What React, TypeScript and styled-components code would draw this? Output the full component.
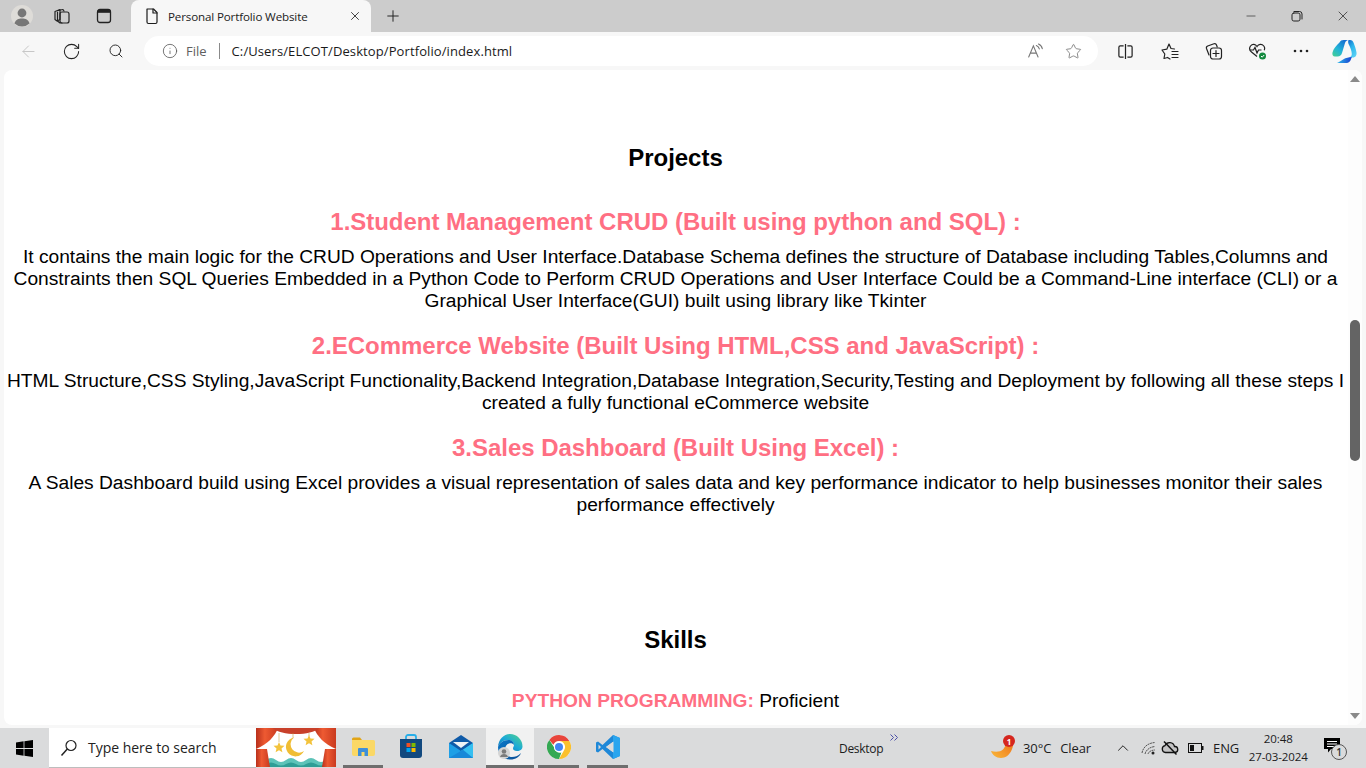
import React from "react";
import styled, { createGlobalStyle } from "styled-components";
import { ArrowLeft, RotateCw, Search, Info, Star, Plus, X, Minus, ChevronUp } from "lucide-react";

const Global = createGlobalStyle`
  html, body { margin: 0; padding: 0; width: 100%; height: 100%; overflow: hidden; background: #f7f7f7; }
  #root { width: 1366px; height: 768px; }
  * { box-sizing: border-box; }
`;

const UI = `"Open Sans", "Noto Sans", sans-serif`;

const Shell = styled.div`
  width: 1366px; height: 768px; display: flex; flex-direction: column;
  font-family: ${UI}; background: #f7f7f7; overflow: hidden;
`;
const TabStrip = styled.div`
  height: 32px; flex: none; background: #cccccc; display: flex; align-items: center;
`;
const Avatar = styled.div`
  width: 22px; height: 22px; margin-left: 11px; flex: none;
  display: flex;
`;
const StripIcon = styled.div<{ $ml: number }>`
  margin-left: ${p => p.$ml}px; width: 18px; height: 18px; flex: none; display: flex; color: #222;
`;
const Tab = styled.div`
  width: 240px; height: 32px; margin-left: 18px; flex: none; background: #f7f7f7;
  border-radius: 8px 8px 0 0; display: flex; align-items: center; padding-left: 13px; color: #1c1c1c;
  align-self: flex-end;
`;
const TabTitle = styled.div`
  margin-left: 8px; width: 180px; font-size: 11.6px; letter-spacing: -0.14px; white-space: nowrap; color: #222;
`;
const WindowControls = styled.div`
  margin-left: auto; display: flex; color: #222; padding-right: 0;
`;
const WinBtn = styled.div`
  width: 46px; height: 32px; display: flex; align-items: center; justify-content: center;
`;
const Toolbar = styled.div`
  height: 38px; flex: none; display: flex; align-items: flex-start; background: #f7f7f7; padding-top: 4px;
`;
const ToolIcon = styled.div<{ $w: number; $c?: string }>`
  width: ${p => p.$w}px; height: 30px; flex: none; display: flex; align-items: center; justify-content: center;
  color: ${p => p.$c || "#222"};
`;
const AddressBar = styled.div`
  width: 954px; height: 30px; margin-left: 16px; flex: none; background: #fff; border-radius: 15px;
  display: flex; align-items: center; padding-left: 18px; color: #555;
`;
const FileLabel = styled.span`
  margin-left: 8px; font-size: 13px; color: #5f5f5f;
`;
const Sep = styled.span`
  width: 1px; height: 16px; background: #8a8a8a; margin: 0 12px 0 12px;
`;
const Url = styled.span`
  font-size: 13px; color: #1a1a1a; letter-spacing: 0.1px;
`;
const AddressEnd = styled.div`
  margin-left: auto; display: flex; align-items: center; padding-right: 16px; gap: 21px; color: #777;
`;
const Viewport = styled.div`
  height: 655px; flex: none; margin: 0 4px 0 4px; background: #fff; border-radius: 8px;
  display: flex; overflow: hidden;
`;
const Page = styled.main`
  width: 1343px; flex: none; text-align: center; color: #000; font-family: "Liberation Sans", Arial, sans-serif;
  padding-top: 74px; overflow: hidden;
`;
const SectionTitle = styled.h2<{ $mt?: number }>`
  font-size: 24px; line-height: 28px; font-weight: 700; letter-spacing: -0.03px; margin: ${p => p.$mt || 0}px 0 0; color: #000;
`;
const ProjectTitle = styled.h3<{ $mt: number }>`
  font-size: 24px; line-height: 28px; font-weight: 700; letter-spacing: -0.03px; margin: ${p => p.$mt}px 0 0; color: #ff6f83;
`;
const Para = styled.p`
  font-size: 19.2px; line-height: 22px; margin: 10px 0 0;
`;
const SkillLine = styled.p`
  font-size: 19.2px; line-height: 22px; margin: 36px 0 0;
`;
const SkillName = styled.span`
  font-weight: 700; color: #ff6f83;
`;
const Scrollbar = styled.div`
  width: 14px; flex: none; margin-left: auto; background: #fdfdfd; display: flex; flex-direction: column;
  align-items: center; position: relative;
`;
const Arrow = styled.div<{ $down?: boolean }>`
  width: 0; height: 0; border-left: 5px solid transparent; border-right: 5px solid transparent;
  ${p => p.$down
    ? "border-top: 6px solid #8a8a8a; margin-top: auto; margin-bottom: 6px;"
    : "border-bottom: 6px solid #8a8a8a; margin-top: 6px;"}
`;
const Thumb = styled.div`
  width: 10px; height: 141px; background: #646464; border-radius: 5px; margin-top: 238px;
`;
const Taskbar = styled.div`
  height: 40px; flex: none; margin-top: 3px; background: #dadbdc; display: flex; align-items: stretch;
  position: relative;
`;
const StartBtn = styled.div`
  width: 49px; display: flex; align-items: center; justify-content: center; flex: none;
`;
const SearchBox = styled.div`
  width: 207px; flex: none; background: #fff; display: flex; align-items: center; padding-left: 11px;
  border-bottom: 1px solid #bdbdbd; color: #222;
`;
const SearchText = styled.span`
  font-size: 14px; margin-left: 10px; color: #222; letter-spacing: -0.02px; white-space: nowrap;
`;
const Banner = styled.div`
  width: 80px; flex: none; display: flex; height: 39px;
`;
const TaskIcons = styled.div`
  display: flex; flex: none; margin-left: 3px;
`;
const TaskItem = styled.div<{ $w: number; $active?: boolean; $running?: boolean }>`
  width: ${p => p.$w}px; flex: none; display: flex; align-items: center; justify-content: center; position: relative;
  background: ${p => p.$active ? "#f1f1f1" : "transparent"};
  padding-bottom: 3px;
  ${p => p.$running ? `&::after { content: ""; position: absolute; bottom: 0; left: ${p.$active ? 0 : 4}px; right: ${p.$active ? 0 : 4}px; height: 3px; background: #6e6e6e; }` : ""}
`;
const Tray = styled.div`
  display: flex; align-items: center; flex: 1; color: #1c1c1c; font-size: 13px;
`;
const DesktopLabel = styled.span`
  margin-left: 207px; font-size: 12px; letter-spacing: -0.3px; position: relative; width: 43px; flex: none; white-space: nowrap;
`;
const Chevrons = styled.span`
  position: absolute; left: 51px; top: -6px; display: flex; color: #4b4fa8;
`;
const Weather = styled.div`
  margin-left: 109px; width: 24px; height: 24px; position: relative; flex: none;
`;
const WeatherBadge = styled.span`
  position: absolute; right: 0; top: -1px; width: 12px; height: 12px; border-radius: 50%; background: #d5261e;
  color: #fff; font-size: 8px; font-weight: 700; display: flex; align-items: center; justify-content: center;
`;
const TrayText = styled.span<{ $ml: number }>`
  margin-left: ${p => p.$ml}px; white-space: nowrap; font-size: 13px; letter-spacing: -0.1px;
`;
const TrayIcon = styled.div<{ $ml: number }>`
  margin-left: ${p => p.$ml}px; display: flex; flex: none; color: #222;
`;
const Clock = styled.div`
  margin-left: 9px; width: 60px; text-align: center; font-size: 11.5px; line-height: 18px; letter-spacing: -0.1px; flex: none;
  white-space: nowrap;
`;
const NotifWrap = styled.div`
  margin-left: 16px; position: relative; width: 20px; height: 20px; flex: none;
`;
const NotifCount = styled.span`
  position: absolute; left: 7px; top: 6px; width: 16px; height: 16px; border-radius: 50%; border: 1px solid #555;
  background: #dadbdc; font-size: 10px; font-weight: 600; display: flex; align-items: center; justify-content: center; color: #333;
`;

const S = { fill: "none", stroke: "currentColor", strokeWidth: 1.2, strokeLinecap: "round" as const, strokeLinejoin: "round" as const };

const AvatarIcon = () => (
  <svg width="22" height="22" viewBox="0 0 22 22">
    <circle cx="11" cy="11" r="11" fill="#dedcd8" />
    <circle cx="11" cy="8" r="4.4" fill="#777" />
    <path d="M3.5 18.5C4.5 14.5 7.5 13.5 11 13.5s6.500 1 7.500 5A11 11 0 0 1 3.500 18.500z" fill="#777" />
  </svg>
);
const WorkspacesIcon = () => (
  <svg width="18" height="18" viewBox="0 0 18 18" {...S}>
    <path d="M2 4.500 7 2.500v10l-3 1.500-2-1.500z" />
    <path d="M5 3.500 10 2.500 11 4" />
    <rect x="7" y="5" width="9" height="11" rx="2" />
    <path d="M4.500 5 4.500 14 7 16h2" />
  </svg>
);
const TabsIcon = () => (
  <svg width="18" height="18" viewBox="0 0 18 18" fill="none" stroke="currentColor" strokeWidth="1.3">
    <rect x="2.500" y="2.500" width="13" height="13" rx="2.500" />
    <path d="M3 5.200h12V5a2 2 0 0 0-2-2H5a2 2 0 0 0-2 2z" fill="currentColor" />
  </svg>
);
const PageIcon = () => (
  <svg width="16" height="18" viewBox="0 0 16 18" {...S}>
    <path d="M3 2h6.500L13 5.500V15a1.500 1.500 0 0 1-1.500 1.500h-7A1.500 1.500 0 0 1 3 15z" />
    <path d="M9 2v4h4" />
  </svg>
);
const RestoreIcon = () => (
  <svg width="12" height="12" viewBox="0 0 12 12" {...S} strokeWidth="1">
    <rect x="1" y="3" width="8" height="8" rx="1.800" />
    <path d="M3 1.500h5.500A2.500 2.500 0 0 1 11 4v5" />
  </svg>
);
const ReadAloud = () => (
  <svg width="17" height="16" viewBox="0 0 20 18" fill="none" stroke="#777" strokeWidth="1.300" strokeLinecap="round">
    <path d="M2 16 7.500 3 13 16M4 11.500h7" />
    <path d="M11 2.500c2 .8 3 2 3.500 4M13.500.8c2.500 1 4 3 4.500 5.500" />
  </svg>
);
const SplitIcon = () => (
  <svg width="17" height="17" viewBox="0 0 18 18" fill="none" stroke="#222" strokeWidth="1.300">
    <path d="M7 3H3.500A1.500 1.500 0 0 0 2 4.500v9A1.500 1.500 0 0 0 3.500 15H7M11 3h3.500A1.500 1.500 0 0 1 16 4.500v9a1.500 1.500 0 0 1-1.500 1.500H11M9 1v16" />
  </svg>
);
const FavIcon = () => (
  <svg width="18" height="18" viewBox="0 0 18 18" {...S} stroke="#222">
    <path d="M8 2l2 4.500 3.500.5M6.500 15.500 3 16.500l.8-4.500L1 8l4.800-.800L8 2M6.500 15.500l2.500 1.500" />
    <path d="M11 9.500h6M11 12.500h6M11 15.500h6" />
  </svg>
);
const CollectionsIcon = () => (
  <svg width="18" height="18" viewBox="0 0 18 18" {...S} stroke="#222">
    <path d="M4 13 1.500 6.500a2 2 0 0 1 1.200-2.500L9 1.800a2 2 0 0 1 2.500 1.200l.7 2" />
    <rect x="5.500" y="6" width="11" height="11" rx="2.500" />
    <path d="M11 8.500v6M8 11.500h6" />
  </svg>
);
const HealthIcon = () => (
  <svg width="20" height="20" viewBox="0 0 20 20">
    <path d="M9 15.500 3.500 11a4.500 4.500 0 0 1-1-6c2-2.500 5-2 6.500.5 1.500-2.500 4.800-3 6.800-.5 1 1.300 1 3 .4 4.300" fill="none" stroke="#222" strokeWidth="1.200" />
    <path d="M2 9h3.500l1.500-2.500 2 5.500 1.500-3h3" fill="none" stroke="#222" strokeWidth="1.200" />
    <circle cx="14.500" cy="15" r="3.500" fill="#12893d" />
    <path d="M13 15l1.200 1.200 2-2.200" fill="none" stroke="#fff" strokeWidth="1" />
  </svg>
);
const DotsIcon = () => (
  <svg width="16" height="4" viewBox="0 0 16 4" fill="#222">
    <circle cx="2" cy="2" r="1.300" /><circle cx="8" cy="2" r="1.300" /><circle cx="14" cy="2" r="1.300" />
  </svg>
);
const CopilotIcon = () => (
  <svg width="25" height="25" viewBox="0 0 25 25">
    <defs>
      <linearGradient id="cp1" x1="0" y1="1" x2=".8" y2="0"><stop offset="0" stopColor="#46d08e" /><stop offset=".45" stopColor="#22b4d8" /><stop offset="1" stopColor="#1468d0" /></linearGradient>
      <linearGradient id="cp2" x1=".2" y1="0" x2=".8" y2="1"><stop offset="0" stopColor="#1573cf" /><stop offset=".4" stopColor="#2cb6ec" /><stop offset="1" stopColor="#5cd2f5" /></linearGradient>
      <linearGradient id="cp3" x1="0" y1="0" x2="1" y2="0"><stop offset="0" stopColor="#2bb8ea" /><stop offset="1" stopColor="#1a3fd0" /></linearGradient>
    </defs>
    <path d="M7.500 3.500C8.200 1.800 9.800 1 11.500 1h5c-1.700.3-3 1.300-3.500 3L10 14c-.7 2-2 3.500-4.500 3.500H3C.8 17.500 0 15.500.5 13.500 1.300 10 4.500 6 7.500 3.500z" fill="url(#cp1)" />
    <path d="M16.500 1h1.500c2 0 3 1 3.700 3 1 3 2.300 6 2.800 9.500.4 2.700-1 5-3.500 5h-4c1.800-.5 2.800-1.600 2.800-3.500 0-3-1.500-6.500-3-9.500-.6-1.300-1-3-.3-4.500z" fill="url(#cp2)" />
    <path d="M5 24h9.500c2.200 0 3.600-1.200 4.300-3.200l1-2.800c-3 .2-6 .8-8.300 2.300C9.500 21.500 7 23.500 5 24z" fill="url(#cp3)" />
  </svg>
);
const WinLogo = () => (
  <svg width="17" height="17" viewBox="0 0 17 17" fill="#000">
    <path d="M0 2.400 7.600 1.300v6.700H0zM8.400 1.200 17 0v8H8.400zM0 8.900h7.600v6.800L0 14.600zM8.400 8.900H17V17l-8.600-1.200z" />
  </svg>
);
const SearchGlass = () => (
  <svg width="18" height="18" viewBox="0 0 18 18" fill="none" stroke="#222" strokeWidth="1.200">
    <circle cx="11" cy="6.500" r="5" />
    <path d="M7.300 10 1.500 16.500" strokeWidth="1.500" />
  </svg>
);
const Theatre = () => (
  <svg width="80" height="39" viewBox="0 0 80 39">
    <defs>
      <linearGradient id="cur" x1="0" x2="1" y1="0" y2="0">
        <stop offset="0" stopColor="#b8301c" /><stop offset=".4" stopColor="#ee5a32" /><stop offset="1" stopColor="#c93a1f" />
      </linearGradient>
    </defs>
    <rect width="80" height="39" fill="#fff" />
    <path d="M10 32q5-4 10 0t10 0 10 0 10 0 10 0 10 0v7H10z" fill="#5cc3b8" />
    <path d="M10 36q5-3 10 0t10 0 10 0 10 0 10 0 10 0v3H10z" fill="#2f9e96" />
    <path d="M0 0h22C19 8 12 16 0 21z" fill="url(#cur)" />
    <path d="M80 0H58c3 8 10 16 22 21z" fill="url(#cur)" />
    <path d="M17 0h46c-4 4-13 6-23 6S21 4 17 0z" fill="#c8402a" />
    <path d="M0 21h11c1 6 2 13 3 18H0z" fill="url(#cur)" />
    <path d="M80 21H69c-1 6-2 13-3 18h14z" fill="url(#cur)" />
    <path d="M23 5v9M37 5v5M53 5v3" stroke="#c9a34a" strokeWidth=".6" />
    <path d="M23 14l1.500 3.500 4 .3-3 2.600.9 3.800-3.400-2-3.400 2 .9-3.800-3-2.600 4-.3z" fill="#f3c33c" />
    <path d="M53 7l1.500 3.500 4 .3-3 2.600.9 3.800-3.400-2-3.400 2 .9-3.800-3-2.600 4-.3z" fill="#f3c33c" />
    <path d="M38 9.500A9.500 9.500 0 1 0 48 23 8 8 0 0 1 38 9.500z" fill="#f0bd34" />
  </svg>
);
const FolderIcon = () => (
  <svg width="24" height="22" viewBox="0 0 24 22">
    <path d="M1 3a1.500 1.500 0 0 1 1.500-1.500H9L11 4H1z" fill="#e2a517" />
    <path d="M1 4h21.500A1.500 1.500 0 0 1 24 5.500V18a2 2 0 0 1-2 2H3a2 2 0 0 1-2-2z" fill="#fad866" />
    <path d="M7 20v-7a1 1 0 0 1 1-1h8a1 1 0 0 1 1 1v7h-3.500v-4h-3v4z" fill="#3e8fd8" />
  </svg>
);
const StoreIcon = () => (
  <svg width="24" height="25" viewBox="0 0 24 25">
    <path d="M7 7V3a2 2 0 0 1 2-2h6a2 2 0 0 1 2 2v4" fill="none" stroke="#28aee8" strokeWidth="1.800" />
    <path d="M1 5h22v16a3 3 0 0 1-3 3H4a3 3 0 0 1-3-3z" fill="#12497f" />
    <rect x="7.500" y="9" width="4" height="4" fill="#f25022" />
    <rect x="12.500" y="9" width="4" height="4" fill="#7fba00" />
    <rect x="7.500" y="14" width="4" height="4" fill="#00a4ef" />
    <rect x="12.500" y="14" width="4" height="4" fill="#ffb900" />
  </svg>
);
const MailIcon = () => (
  <svg width="24" height="24" viewBox="0 0 24 24">
    <path d="M0 8 12 0l12 8v3L12 18 0 11z" fill="#0f5aa8" />
    <path d="M4 7h16l-8 6z" fill="#eef2f6" />
    <path d="M0 8 12 16 24 8v15H0z" fill="#1e9fe6" />
    <path d="M12 16 24 8v15z" fill="#35bff0" />
    <path d="M0 23 14 14.800l10 8.200z" fill="#1888d8" />
  </svg>
);
const EdgeIcon = () => (
  <svg width="26" height="26" viewBox="0 0 26 26">
    <defs>
      <linearGradient id="ed1" x1="0" y1="1" x2="1" y2="0"><stop offset="0" stopColor="#0d6ab8" /><stop offset=".5" stopColor="#1ba9d8" /><stop offset="1" stopColor="#54d58a" /></linearGradient>
      <linearGradient id="ed2" x1="0" y1="0" x2="1" y2="1"><stop offset="0" stopColor="#0a78c8" /><stop offset="1" stopColor="#0c4f96" /></linearGradient>
    </defs>
    <path d="M13 0a12.500 12.500 0 0 1 12.500 12.500c0 3-2.500 4.500-5.500 4.500-2.500 0-4-1-4-2.500 0-1.500 1-2 1-3.500 0-3-3-5-6-5C6 6 2 9.500 1 13 1.500 5.500 6.500 0 13 0z" fill="url(#ed1)" />
    <path d="M1 13c1-3.500 5-7 10.500-7 3 0 5.500 2 5.500 5-1-1.500-3-2-5-1.500-2.500.7-4 3-4 6 0 4 3 7.500 7 7.500 3 0 6-1 9-4-1.500 4-5.500 6.500-10.500 6.500C6 25.500 1 20 1 13z" fill="url(#ed2)" />
    <circle cx="7" cy="19" r="6" fill="#d4d4d4" />
    <circle cx="7" cy="17.500" r="2.300" fill="#7b7b7b" />
    <path d="M3 23c.5-2 2-3 4-3s3.500 1 4 3z" fill="#7b7b7b" />
  </svg>
);
const ChromeIcon = () => (
  <svg width="24" height="24" viewBox="0 0 24 24">
    <circle cx="12" cy="12" r="12" fill="#fff" />
    <path d="M12 0a12 12 0 0 1 10.400 6H12a6 6 0 0 0-5.600 3.800L2.300 4.900A12 12 0 0 1 12 0z" fill="#e8453c" />
    <path d="M22.400 6A12 12 0 0 1 12 24l5.200-9A6 6 0 0 0 17.200 9 6 6 0 0 0 12 6z" fill="#fbc02d" />
    <path d="M2.300 4.900 6.900 12a6 6 0 0 0 7.500 5.500L12 24A12 12 0 0 1 2.300 4.900z" fill="#34a853" />
    <circle cx="12" cy="12" r="5" fill="#fff" />
    <circle cx="12" cy="12" r="4" fill="#4285f4" />
  </svg>
);
const VsCodeIcon = () => (
  <svg width="24" height="24" viewBox="0 0 24 24">
    <path d="M17 0 6.500 10 2 6.500 0 7.500v9l2 1L6.500 14 17 24l7-3V3zM17.500 6.500v11L10 12zM2.500 9.500 5 12l-2.500 2.500z" fill="#1e88d8" />
    <path d="M17 0l7 3v18l-7 3z" fill="#2aa5ee" />
    <path d="M17.500 6.500 10 12l7.500 5.500z" fill="#dadbdc" />
  </svg>
);
const ChevronsIcon = () => (
  <svg width="9" height="7" viewBox="0 0 9 7" fill="none" stroke="currentColor" strokeWidth="1">
    <path d="M.5.500 3.500 3.500.5 6.500M4.500.500 7.500 3.500 4.500 6.500" />
  </svg>
);
const MoonIcon = () => (
  <svg width="24" height="24" viewBox="0 0 24 24">
    <defs>
      <linearGradient id="mn" x1="0" y1="1" x2="1" y2="0"><stop offset="0" stopColor="#f9b93a" /><stop offset="1" stopColor="#ee6a15" /></linearGradient>
    </defs>
    <path d="M22 2c1.800 9-3 20-12 20C5 22 1.500 19 0 15c5 1.300 9.500.8 12-1.500C14.500 11 15.500 7 14 3z" fill="url(#mn)" />
  </svg>
);
const WifiIcon = () => (
  <svg width="16" height="16" viewBox="0 0 16 16" fill="none" stroke="#555" strokeWidth="1">
    <path d="M1 13c1-6 6-10 13-10.500M4 14c.5-3 4-7 10-7.500M7 14c.5-2 3-4 7-4" strokeDasharray="2 .6" />
    <circle cx="12" cy="13" r="1.500" fill="#222" stroke="none" />
  </svg>
);
const CloudOff = () => (
  <svg width="18" height="16" viewBox="0 0 18 16" fill="none" stroke="#111" strokeWidth="1.300">
    <path d="M4.500 12.500A3.500 3.500 0 0 1 4 5.600 5 5 0 0 1 13.500 6.500a3 3 0 0 1 .5 6z" fill="#9a9a9a" fillOpacity=".35" />
    <path d="M3 1.500 15.500 14.500" strokeWidth="1.500" />
  </svg>
);
const BatteryIcon = () => (
  <svg width="16" height="10" viewBox="0 0 16 10">
    <rect x=".5" y=".5" width="13" height="9" fill="none" stroke="#111" />
    <rect x="2" y="2" width="4" height="6" fill="#111" />
    <rect x="14" y="3" width="1.500" height="4" fill="#111" />
  </svg>
);
const NotifIcon = () => (
  <svg width="16" height="15" viewBox="0 0 16 15">
    <path d="M0 0h16v11H7l-3 3.500V11H0z" fill="#000" />
    <path d="M3 3.500h10M3 6h10M3 8.500h7" stroke="#fff" strokeWidth="1" />
  </svg>
);

export default function App() {
  return (
    <Shell>
      <Global />
      <TabStrip>
        <Avatar><AvatarIcon /></Avatar>
        <StripIcon $ml={20}><WorkspacesIcon /></StripIcon>
        <StripIcon $ml={24}><TabsIcon /></StripIcon>
        <Tab>
          <PageIcon />
          <TabTitle>Personal Portfolio Website</TabTitle>
          <X size={14} strokeWidth={1.4} />
        </Tab>
        <StripIcon $ml={13}><Plus size={18} strokeWidth={1.3} /></StripIcon>
        <WindowControls>
          <WinBtn><Minus size={14} strokeWidth={1.1} /></WinBtn>
          <WinBtn><RestoreIcon /></WinBtn>
          <WinBtn><X size={16} strokeWidth={1.1} /></WinBtn>
        </WindowControls>
      </TabStrip>
      <Toolbar>
        <ToolIcon $w={18} $c="transparent" />
        <ToolIcon $w={20} $c="#c4c4c4"><ArrowLeft size={19} strokeWidth={1.2} /></ToolIcon>
        <ToolIcon $w={66}><RotateCw size={19} strokeWidth={1.3} /></ToolIcon>
        <ToolIcon $w={24}><Search size={16} strokeWidth={1.4} /></ToolIcon>
        <AddressBar>
          <Info size={16} strokeWidth={1.2} />
          <FileLabel>File</FileLabel>
          <Sep />
          <Url>C:/Users/ELCOT/Desktop/Portfolio/index.html</Url>
          <AddressEnd>
            <ReadAloud />
            <Star size={17} strokeWidth={1.2} />
          </AddressEnd>
        </AddressBar>
        <ToolIcon $w={54}><SplitIcon /></ToolIcon>
        <ToolIcon $w={36}><FavIcon /></ToolIcon>
        <ToolIcon $w={52}><CollectionsIcon /></ToolIcon>
        <ToolIcon $w={36}><HealthIcon /></ToolIcon>
        <ToolIcon $w={50}><DotsIcon /></ToolIcon>
        <ToolIcon $w={36}><CopilotIcon /></ToolIcon>
      </Toolbar>
      <Viewport>
        <Page>
          <SectionTitle>Projects</SectionTitle>
          <ProjectTitle $mt={36}>1.Student Management CRUD (Built using python and SQL) :</ProjectTitle>
          <Para>
            It contains the main logic for the CRUD Operations and User Interface.Database Schema defines the structure of Database including Tables,Columns and Constraints then SQL Queries Embedded in a Python Code to Perform CRUD Operations and User Interface Could be a Command-Line interface (CLI) or a Graphical User Interface(GUI) built using library like Tkinter
          </Para>
          <ProjectTitle $mt={20}>2.ECommerce Website (Built Using HTML,CSS and JavaScript) :</ProjectTitle>
          <Para>
            HTML Structure,CSS Styling,JavaScript Functionality,Backend Integration,Database Integration,Security,Testing and Deployment by following all these steps I created a fully functional eCommerce website
          </Para>
          <ProjectTitle $mt={20}>3.Sales Dashboard (Built Using Excel) :</ProjectTitle>
          <Para>
            A Sales Dashboard build using Excel provides a visual representation of sales data and key performance indicator to help businesses monitor their sales performance effectively
          </Para>
          <SectionTitle $mt={110}>Skills</SectionTitle>
          <SkillLine><SkillName>PYTHON PROGRAMMING:</SkillName> Proficient</SkillLine>
        </Page>
        <Scrollbar>
          <Arrow />
          <Thumb />
          <Arrow $down />
        </Scrollbar>
      </Viewport>
      <Taskbar>
        <StartBtn><WinLogo /></StartBtn>
        <SearchBox>
          <SearchGlass />
          <SearchText>Type here to search</SearchText>
        </SearchBox>
        <Banner><Theatre /></Banner>
        <TaskIcons>
          <TaskItem $w={48} $running><FolderIcon /></TaskItem>
          <TaskItem $w={48}><StoreIcon /></TaskItem>
          <TaskItem $w={51}><MailIcon /></TaskItem>
          <TaskItem $w={48} $active $running><EdgeIcon /></TaskItem>
          <TaskItem $w={49} $running><ChromeIcon /></TaskItem>
          <TaskItem $w={49} $running><VsCodeIcon /></TaskItem>
        </TaskIcons>
        <Tray>
          <DesktopLabel>Desktop<Chevrons><ChevronsIcon /></Chevrons></DesktopLabel>
          <Weather>
            <MoonIcon />
            <WeatherBadge>1</WeatherBadge>
          </Weather>
          <TrayText $ml={8}>30°C</TrayText>
          <TrayText $ml={9}>Clear</TrayText>
          <TrayIcon $ml={23}><ChevronUp size={18} strokeWidth={1.3} /></TrayIcon>
          <TrayIcon $ml={9}><WifiIcon /></TrayIcon>
          <TrayIcon $ml={4}><CloudOff /></TrayIcon>
          <TrayIcon $ml={9}><BatteryIcon /></TrayIcon>
          <TrayText $ml={9}>ENG</TrayText>
          <Clock>20:48<br />27-03-2024</Clock>
          <NotifWrap>
            <NotifIcon />
            <NotifCount>1</NotifCount>
          </NotifWrap>
        </Tray>
      </Taskbar>
    </Shell>
  );
}
